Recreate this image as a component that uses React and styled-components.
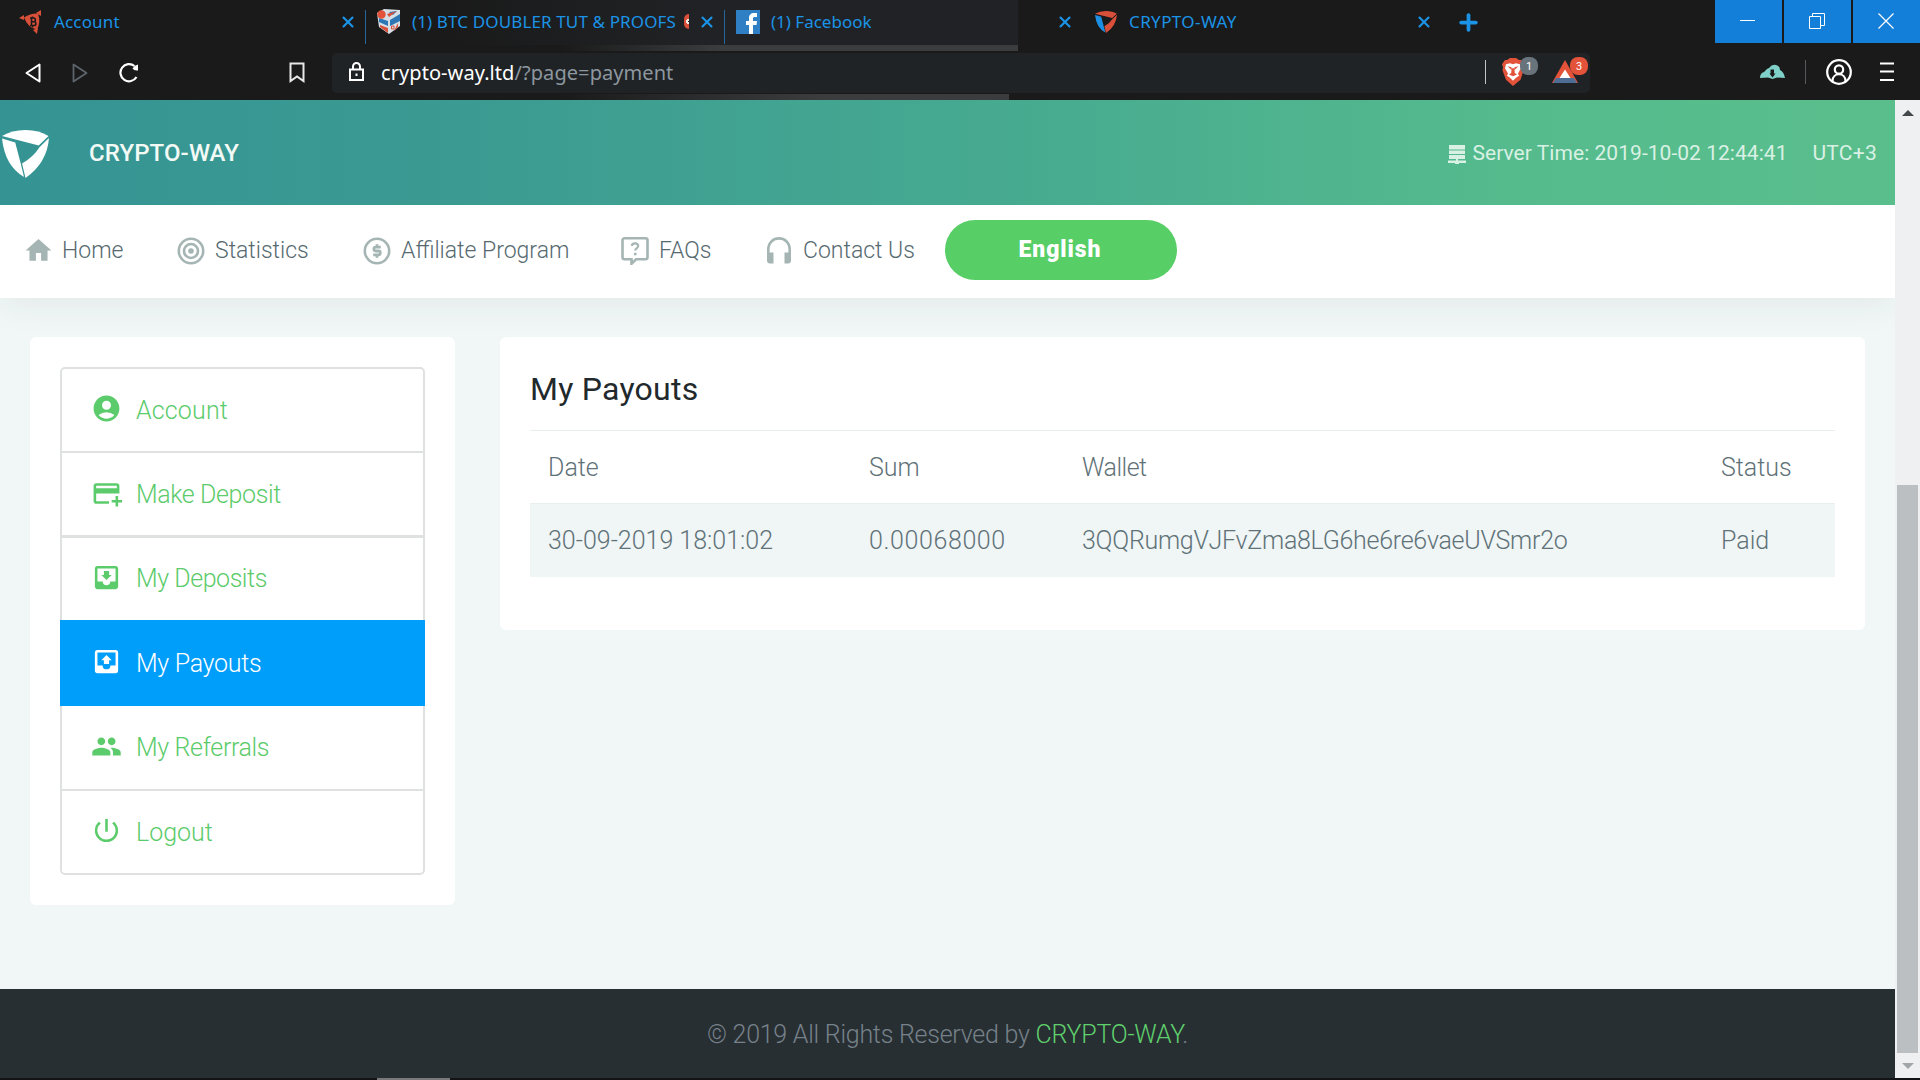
import styled, { createGlobalStyle } from 'styled-components';
import {
  MdHome,
  MdAccountCircle,
  MdAddCard,
  MdMoveToInbox,
  MdPeople,
  MdPowerSettingsNew
} from 'react-icons/md';
import { LuX, LuPlus } from 'react-icons/lu';

const tabs = [
  { icon: 'bit', title: 'Account', width: 366, indent: 18, spacing: 0.15 },
  { icon: 'tut', title: '(1) BTC DOUBLER TUT & PROOFS', width: 359, indent: 10, spacing: 0.13, cut: true },
  { icon: 'fb', title: '(1) Facebook', width: 358, indent: 10, spacing: 0 },
  { icon: 'way', title: 'CRYPTO-WAY', width: 359, indent: 10, spacing: 0.4 }
];

const navLinks = [
  { icon: 'home', label: 'Home', gap: 54, width: 61 },
  { icon: 'target', label: 'Statistics', gap: 53, width: 95 },
  { icon: 'dollar', label: 'Affiliate Program', gap: 53, width: 167 },
  { icon: 'faq', label: 'FAQs', gap: 53, width: 53 },
  { icon: 'phones', label: 'Contact Us', gap: 29, width: 113 }
];

const OutboxIcon = ({ size }) => (
  <svg viewBox='0 0 24 24' width={size} height={size} fill='currentColor'>
    <path d='M19 3H5a2 2 0 0 0-2 2v14a2 2 0 0 0 2 2h14a2 2 0 0 0 2-2V5a2 2 0 0 0-2-2zm0 12h-4a3 3 0 0 1-6 0H5V5h14v10zM16 11h-2v3h-4v-3H8l4-4 4 4z' />
  </svg>
);

const menu = [
  { Icon: MdAccountCircle, label: 'Account', height: 86, overlap: 0, spacing: 0.15 },
  { Icon: MdAddCard, label: 'Make Deposit', height: 87, overlap: 2, spacing: -0.4 },
  { Icon: MdMoveToInbox, label: 'My Deposits', height: 87, overlap: 3, spacing: -0.45 },
  { Icon: OutboxIcon, label: 'My Payouts', height: 86, overlap: 2, spacing: -0.3, active: true },
  { Icon: MdPeople, label: 'My Referrals', height: 87, overlap: 2, spacing: -0.35 },
  { Icon: MdPowerSettingsNew, label: 'Logout', height: 86, overlap: 2, spacing: 0 }
];

const payouts = [
  {
    date: '30-09-2019 18:01:02',
    sum: '0.00068000',
    wallet: '3QQRumgVJFvZma8LG6he6re6vaeUVSmr2o',
    status: 'Paid'
  }
];

const ShieldLogo = ({ width, height, top, left, right }) => (
  <svg width={width} height={height} viewBox='0 0 48 48' preserveAspectRatio='none'>
    <path fill={top} d='M0 6Q10 0 24 0Q38 0 47.500 6L37.500 15.500Z' />
    <path fill={left} d='M0 8.500L13.500 12.500L19 33L22.500 47Q3 36 0 8.500Z' />
    <path fill={right} d='M48 8Q46 33 24 48L20.500 33.500Q32 27 38.500 17Z' />
  </svg>
);

const TabIcon = ({ name }) => {
  if (name === 'bit') {
    return (
      <svg width='24' height='24' viewBox='0 0 24 24' fill='#d9503a'>
        <path d='M5 7.500Q12 3 19 3.500Q22 12 18 19.500Q9 18 5 7.500z' />
        <path d='M0 8l5-3v5zM22 0v6l-5-3zM18 24l-4-4 5-2z' />
        <path
          d='M11 8h3.500a1.900 1.900 0 0 1 0 3.800H12h3a1.900 1.900 0 0 1 0 3.800h-4M12.500 8v8M13.500 6.500v2M13.500 15.500v2'
          stroke='#1a1a1a'
          strokeWidth='1.500'
          fill='none'
        />
      </svg>
    );
  }
  if (name === 'tut') {
    return (
      <svg width='24' height='26' viewBox='0 0 24 26'>
        <path fill='#d5dfe5' d='M0 4L7 0 23 1V17L12 25 2 18Z' />
        <path fill='#2d76b5' d='M2 9l9 3v5l-9-4zM13 11l10-6v7l-10 5zM12 3l8-1-4 4z' />
        <path fill='#d9503a' d='M3 16l8 3v5l-8-6zM21 14v4l-4 4zM10 5l10-3-8 6z' />
        <circle cx='4.500' cy='5.500' r='4.200' fill='#e2533a' />
        <path fill='none' stroke='#d9503a' d='M14.500 17h2.500v3h-2.500z' />
      </svg>
    );
  }
  if (name === 'fb') {
    return (
      <svg width='24' height='24' viewBox='0 0 24 24'>
        <path fill='#2f7fc4' d='M0 0h24v24H0z' />
        <path fill='#fff' d='M13 24v-9h-3v-4h3V8c0-3 2-5 5-5h3v4h-2c-1.500 0-2 .5-2 2v2h4l-.5 4H17v9z' />
      </svg>
    );
  }
  return <ShieldLogo width={22} height={22} top='#d9503a' left='#1c8fe3' right='#d9503a' />;
};

const NavIcon = ({ name }) => {
  if (name === 'home') return <HomeIcon size={31} />;
  return (
    <svg width='28' height='28' viewBox='0 0 28 28' fill='none' stroke='currentColor' strokeWidth='2.6'>
      {name === 'target' && (
        <>
          <circle cx='14' cy='14' r='12.200' />
          <circle cx='14' cy='14' r='7' />
          <circle cx='14' cy='14' r='2.800' fill='currentColor' stroke='none' />
        </>
      )}
      {name === 'dollar' && (
        <>
          <circle cx='14' cy='14' r='12.200' />
          <path
            d='M17.800 10.200h-5a1.900 1.900 0 0 0 0 3.800h2.600a1.900 1.900 0 0 1 0 3.800h-5.200M14 7.200v3M14 17.800v3'
            strokeWidth='2.800'
          />
        </>
      )}
      {name === 'faq' && (
        <>
          <path
            d='M3.500 1.300h21a2 2 0 0 1 2 2v17a2 2 0 0 1-2 2H15l-4.500 4.500v-4.500h-7a2 2 0 0 1-2-2v-17a2 2 0 0 1 2-2z'
            strokeWidth='2.600'
          />
          <path d='M10.800 8.800c.4-3.500 6.700-3.200 6.400.2-.2 2.300-3 2.300-3 4.500' strokeWidth='2.200' />
          <path d='M14.200 15.800v2.500' strokeWidth='2.600' />
        </>
      )}
      {name === 'phones' && (
        <>
          <path d='M3.300 20v-7.500C3.300-2.300 24.700-2.300 24.700 12.500V20' />
          <path
            d='M2 15.500h6.500v11H5a3 3 0 0 1-3-3zM19.500 15.500H26v8a3 3 0 0 1-3 3h-3.500z'
            fill='currentColor'
            stroke='none'
          />
        </>
      )}
    </svg>
  );
};

const BrowserTabs = () => (
  <TabBar>
    {tabs.map(({ icon, title, width, indent, spacing, cut }, i) => (
      <Tab key={icon} $width={width} $indent={indent} $divided={i < 2}>
        <IconSlot>
          <TabIcon name={icon} />
        </IconSlot>
        <TabTitle $spacing={spacing}>{title}</TabTitle>
        {cut && <CutEmoji />}
        <LuX size={18} strokeWidth={2.8} />
      </Tab>
    ))}
    <NewTab>
      <LuPlus size={25} strokeWidth={3.6} />
    </NewTab>
    <WindowButtons>
      <WindowButton>
        <svg width='15' height='16' stroke='#fff'>
          <path d='M0 7.500h15' />
        </svg>
      </WindowButton>
      <WindowButton>
        <svg width='16' height='16' fill='none' stroke='#fff'>
          <path d='M.5 3.500h11v12H.5zM3.500 3V.5h12v12H12' />
        </svg>
      </WindowButton>
      <WindowButton>
        <svg width='16' height='16' fill='none' stroke='#fff' strokeWidth='1.200'>
          <path d='M.5.5l15 15M15.500.5l-15 15' />
        </svg>
      </WindowButton>
    </WindowButtons>
  </TabBar>
);

const AddressBar = () => (
  <ToolBar>
    <ToolIcons>
      <svg width='16' height='20' viewBox='0 0 16 20' fill='none' stroke='#fff' strokeWidth='2' strokeLinejoin='round'>
        <path d='M14.500 1.500v17L1.500 10z' />
      </svg>
      <svg width='16' height='20' viewBox='0 0 16 20' fill='none' stroke='#5d646b' strokeWidth='1.800' strokeLinejoin='round'>
        <path d='M1.500 1.500v17l13-8.500z' />
      </svg>
      <svg width='22' height='22' viewBox='0 0 22 22' fill='none' stroke='#fff' strokeWidth='2.200'>
        <path d='M17.500 15A8.600 8.600 0 1 1 15.500 4' />
        <path d='M13.500 6.500q1.500-3 5.500-4v6q-4 .5-5.500-2z' fill='#fff' stroke='none' />
      </svg>
    </ToolIcons>
    <svg width='16' height='21' viewBox='0 0 16 21' fill='none' stroke='#e8e8e8' strokeWidth='2'>
      <path d='M1.500 1.500h13v17.500L8 14.500 1.500 19z' />
    </svg>
    <AddressField>
      <svg width='15' height='20' viewBox='0 0 15 20' fill='none' stroke='#fff' strokeWidth='2'>
        <path d='M1 7.500h13v10.500H1zM4 7V4.500a3.500 3.500 0 0 1 7 0V7' />
        <path d='M6.500 11.500h2v2.500h-2z' fill='#fff' stroke='none' />
      </svg>
      <Address>
        crypto-way.ltd<span>/?page=payment</span>
      </Address>
      <Separator $color='#c4c4c4' />
      <Extension>
        <svg width='22' height='28' viewBox='0 0 22 27' preserveAspectRatio='none'>
          <path fill='#e2533a' d='M5 2l3-2h6l3 2 2 0 3 4-1 3 .5 3-3 9-7.500 6L4 21 .5 12 1 9 0 6l3-4z' />
          <path fill='#fff' d='M4 6l4-1 3 1 3-1 4 1 1 4-3 5 1 2-3 2-3 3-3-3-3-2 1-2-3-5z' />
          <path fill='#e2533a' d='M5.500 8l4 1v2.500zM16.500 8l-4 1v2.500zM9.700 10h2.600l.5 4.500L15 16l-4 1.500L7 16l2.200-1.500z' />
        </svg>
        <Badge $color='#69737c'>1</Badge>
      </Extension>
      <Extension>
        <svg width='26' height='23' viewBox='0 0 26 23'>
          <path fill='#e2533a' d='M13 0L0 23h26z' />
          <path fill='#4d6d94' d='M4 18L1 23h24l-3-5z' />
          <path fill='#fff' d='M13 9.500L7.500 18h11z' />
        </svg>
        <Badge $color='#e2533a'>3</Badge>
      </Extension>
    </AddressField>
    <ToolRight>
      <svg width='25' height='16' viewBox='0 0 25 16' fill='#7fd0c8'>
        <path d='M0 14Q0 9 4 8L7 5 9 4Q12 0 16 1Q20 2 20 6Q24 8 25 14L17 13.500 12.500 15 8 13.500z' />
        <path fill='#1a1a1a' d='M10.500 5.500h3.500v4h1.500l-3 4-3-4h1z' />
      </svg>
      <Separator $color='#55595d' />
      <svg width='26' height='26' viewBox='0 0 26 26' fill='none' stroke='#fff' strokeWidth='2.200'>
        <circle cx='13' cy='13' r='11.800' />
        <circle cx='13' cy='10.500' r='4.200' />
        <path d='M6.500 22c0-9 13-9 13 0' />
      </svg>
      <MenuBars width='14' height='20' viewBox='0 0 14 20' stroke='#fff' strokeWidth='2'>
        <path d='M0 1.500h14M0 9.500h14M0 18h14' />
      </MenuBars>
    </ToolRight>
  </ToolBar>
);

const App = () => {
  return (
    <>
      <GlobalStyle />
      <Window>
        <BrowserTabs />
        <AddressBar />
        <Viewport>
          <Page>
            <Banner>
              <ShieldLogo width={47} height={48} top='#fff' left='#fff' right='#fff' />
              <Brand>CRYPTO-WAY</Brand>
              <svg width='18' height='19' viewBox='0 0 18 19' fill='#d9f1e4'>
                <path d='M1 0h16v4.500H1zM1 5.500h16V9H1zM1 10h16v4H1zM8 14h2v1.500h8V18h-7v1H7v-1H0v-2.500h8z' />
              </svg>
              <ServerTime>Server Time: 2019-10-02 12:44:41</ServerTime>
              <Zone>UTC+3</Zone>
            </Banner>
            <Navbar>
              {navLinks.map(({ icon, label, gap, width }) => (
                <NavLink key={icon} $gap={gap} $width={width}>
                  <NavIcon name={icon} />
                  <span>{label}</span>
                </NavLink>
              ))}
              <LangButton>English</LangButton>
            </Navbar>
            <Main>
              <Sidebar>
                {menu.map(({ Icon, label, height, overlap, spacing, active }) => (
                  <MenuItem
                    key={label}
                    $height={height}
                    $overlap={overlap}
                    $spacing={spacing}
                    $active={active}
                  >
                    <Icon size={31} />
                    <span>{label}</span>
                  </MenuItem>
                ))}
              </Sidebar>
              <Card>
                <h2>My Payouts</h2>
                <Table>
                  <colgroup>
                    <Col $width={321} />
                    <Col $width={213} />
                    <Col $width={639} />
                    <Col $width={132} />
                  </colgroup>
                  <thead>
                    <tr>
                      <Th>Date</Th>
                      <Th>Sum</Th>
                      <Th $spacing={-0.5}>Wallet</Th>
                      <Th>Status</Th>
                    </tr>
                  </thead>
                  <tbody>
                    {payouts.map((item) => (
                      <tr key={item.date}>
                        <Td>{item.date}</Td>
                        <Td $spacing={0.6}>{item.sum}</Td>
                        <Td $spacing={-0.28}>{item.wallet}</Td>
                        <Td>{item.status}</Td>
                      </tr>
                    ))}
                  </tbody>
                </Table>
              </Card>
            </Main>
            <Footer>
              © 2019 All Rights Reserved by <a>CRYPTO-WAY</a>.
            </Footer>
          </Page>
          <Scrollbar>
            <Arrow>
              <svg width='12' height='6' fill='#44484a'>
                <path d='M6 0l6 6H0z' />
              </svg>
            </Arrow>
            <Thumb />
            <Arrow>
              <svg width='12' height='6' fill='#a2a6a8'>
                <path d='M6 6l6-6H0z' />
              </svg>
            </Arrow>
          </Scrollbar>
        </Viewport>
        <TaskbarEdge />
      </Window>
    </>
  );
};

const GlobalStyle = createGlobalStyle`
  * {
    box-sizing: border-box;
  }
  body {
    margin: 0;
    overflow: hidden;
    background: #1a1a1a;
    font-family: Roboto, 'Liberation Sans', sans-serif;
  }
  svg {
    flex: none;
  }
`;

const Window = styled.div`
  display: flex;
  flex-direction: column;
  width: 1920px;
  height: 1080px;
  background:
    linear-gradient(90deg, transparent, #3a3c3e 160px) 560px 45px / 458px 6px no-repeat,
    linear-gradient(90deg, transparent, #3a3c3e 260px) 560px 94px / 449px 6px no-repeat,
    linear-gradient(90deg, transparent, #202225 260px) 440px 0 / 578px 45px no-repeat,
    #1a1a1a;
`;

const TabBar = styled.div`
  display: flex;
  height: 44px;
  color: #1b93e6;
  font-family: 'Noto Sans', 'Open Sans', sans-serif;
`;

const Tab = styled.div`
  display: flex;
  align-items: center;
  width: ${(props) => props.$width}px;
  padding: 0 9px 1px ${(props) => props.$indent}px;
  background: ${(props) =>
    props.$divided
      ? 'linear-gradient(#27669a, #27669a) 100% 10px / 1px 34px no-repeat'
      : 'none'};
`;

const IconSlot = styled.div`
  display: flex;
  justify-content: center;
  width: 26px;
`;

const TabTitle = styled.span`
  flex: 1;
  padding: 0 0 1px 10px;
  font-size: 17px;
  white-space: nowrap;
  letter-spacing: ${(props) => props.$spacing}px;
`;

const CutEmoji = styled.i`
  width: 5px;
  height: 15px;
  margin-right: 9px;
  border-radius: 7px 0 0 7px;
  background: radial-gradient(circle at 100% 50%, #1a1a1a 1px, #f3e9e4 1px 3px, #d9503a 3px);
`;

const NewTab = styled.div`
  display: flex;
  align-items: center;
  padding-left: 14px;
`;

const WindowButtons = styled.div`
  display: flex;
  gap: 2px;
  margin-left: auto;
`;

const WindowButton = styled.div`
  display: flex;
  align-items: center;
  justify-content: center;
  width: 67px;
  height: 43px;
  padding: 0 2px 1px 0;
  background: #147fd8;
`;

const ToolBar = styled.div`
  display: flex;
  align-items: center;
  height: 56px;
  padding-top: 1px;
`;

const ToolIcons = styled.div`
  display: flex;
  align-items: center;
  gap: 31px;
  width: 289px;
  padding-left: 25px;
`;

const AddressField = styled.div`
  display: flex;
  align-items: center;
  width: 1258px;
  height: 40px;
  margin-left: 27px;
  padding: 0 4px 2px 17px;
  border-radius: 5px;
  background: #202326;
`;

const Address = styled.div`
  flex: 1;
  padding: 1px 0 0 17px;
  color: #fff;
  font-family: 'Noto Sans', 'Open Sans', sans-serif;
  font-size: 20px;
  letter-spacing: 0.07px;
  span {
    color: #8d979f;
  }
`;

const Separator = styled.i`
  width: 1px;
  height: 24px;
  background: ${(props) => props.$color};
`;

const Extension = styled.div`
  position: relative;
  display: flex;
  align-items: center;
  width: 50px;
  height: 28px;
  padding-left: 16px;
`;

const Badge = styled.b`
  position: absolute;
  top: -1px;
  left: 34px;
  width: 18px;
  height: 18px;
  border-radius: 8px;
  background: ${(props) => props.$color};
  color: #fff;
  font-size: 11px;
  font-weight: 400;
  line-height: 19px;
  text-align: center;
`;

const ToolRight = styled.div`
  display: flex;
  align-items: center;
  gap: 20px;
  margin-left: auto;
  padding: 0 26px 1px 0;
`;

const MenuBars = styled.svg`
  margin-left: 8px;
`;

const Viewport = styled.div`
  display: flex;
  height: 978px;
`;

const Page = styled.div`
  display: flex;
  flex-direction: column;
  width: 1895px;
  overflow: hidden;
  background: #f1f7f7;
`;

const Banner = styled.header`
  position: relative;
  z-index: 1;
  display: flex;
  align-items: center;
  height: 105px;
  padding: 3px 18px 0 2px;
  background: linear-gradient(90deg, #359493 0%, #3b9b92 25%, #47ab90 55%, #55bb8d 80%, #5abe8c 100%);
  color: #d9f1e4;
  font-size: 21px;
`;

const Brand = styled.span`
  flex: 1;
  padding: 0 0 2px 40px;
  color: #f3faf6;
  font-size: 24px;
  font-weight: 500;
  letter-spacing: 0.1px;
`;

const ServerTime = styled.span`
  padding: 0 25px 2px 7px;
  letter-spacing: 0.04px;
`;

const Zone = styled.span`
  padding-bottom: 2px;
  letter-spacing: 0.25px;
`;

const Navbar = styled.nav`
  position: relative;
  display: flex;
  align-items: center;
  height: 93px;
  padding: 0 0 3px 23px;
  background: #fff;
  box-shadow: 0 4px 36px rgba(40, 50, 50, 0.08);
`;

const NavLink = styled.a`
  display: flex;
  align-items: center;
  gap: 10px;
  margin-right: ${(props) => props.$gap}px;
  padding-top: 1px;
  color: #566a70;
  font-size: 23px;
  font-weight: 300;
  svg {
    color: #a5b5b4;
  }
  span {
    width: ${(props) => props.$width}px;
    white-space: nowrap;
  }
`;

const HomeIcon = styled(MdHome)`
  margin-right: -2px;
`;

const LangButton = styled.button`
  width: 232px;
  height: 60px;
  padding: 0 2px 1px 0;
  border: 0;
  border-radius: 30px;
  background: #57ce66;
  color: #fff;
  font: 900 23px Roboto, sans-serif;
  letter-spacing: 0.9px;
`;

const Main = styled.main`
  display: flex;
  align-items: flex-start;
  gap: 45px;
  flex: 1;
  padding: 39px 30px;
`;

const Sidebar = styled.aside`
  position: relative;
  width: 425px;
  height: 568px;
  padding: 30px;
  border-radius: 6px;
  background: #fff;
`;

const MenuItem = styled.a`
  position: relative;
  z-index: ${(props) => (props.$active ? 1 : 0)};
  display: flex;
  align-items: center;
  gap: 14px;
  height: ${(props) => props.$height}px;
  margin-top: -${(props) => props.$overlap}px;
  padding-left: 29px;
  border: 2px solid ${(props) => (props.$active ? '#009efb' : '#dfe1e1')};
  background: ${(props) => (props.$active ? '#009efb' : 'transparent')};
  color: ${(props) => (props.$active ? '#fff' : '#5ccb6b')};
  font-size: 25px;
  font-weight: 300;
  letter-spacing: ${(props) => props.$spacing}px;
  svg {
    margin-bottom: 3px;
  }
  &:first-child {
    border-radius: 5px 5px 0 0;
  }
  &:last-child {
    border-radius: 0 0 5px 5px;
  }
`;

const Card = styled.section`
  width: 1365px;
  height: 293px;
  padding: 31px 30px;
  border-radius: 6px;
  background: #fff;
  h2 {
    margin: 0 0 20px;
    color: #22292c;
    font-size: 32px;
    font-weight: 400;
    line-height: 42px;
    letter-spacing: 0.25px;
  }
`;

const Table = styled.table`
  width: 1305px;
  border-collapse: collapse;
  table-layout: fixed;
  color: #5f7278;
  font-size: 25px;
`;

const Col = styled.col`
  width: ${(props) => props.$width}px;
`;

const Th = styled.th`
  height: 73px;
  padding: 0 0 0 18px;
  border-top: 1px solid #e9eeef;
  font-weight: 300;
  text-align: left;
  white-space: nowrap;
  letter-spacing: ${(props) => props.$spacing || 0}px;
`;

const Td = styled(Th).attrs({ as: 'td' })`
  background: #f0f5f6;
`;

const Footer = styled.footer`
  height: 89px;
  background: #282f33;
  color: #76818a;
  font-size: 25px;
  font-weight: 300;
  line-height: 91px;
  letter-spacing: -0.25px;
  text-align: center;
  a {
    color: #5fd06c;
  }
`;

const Scrollbar = styled.div`
  display: flex;
  flex-direction: column;
  align-items: center;
  width: 25px;
  background: #eef0f1;
`;

const Arrow = styled.div`
  display: flex;
  align-items: center;
  height: 25px;
`;

const Thumb = styled.div`
  width: 21px;
  height: 568px;
  margin-top: auto;
  background: #bbbfc1;
`;

const TaskbarEdge = styled.div`
  height: 2px;
  background: linear-gradient(#77797b, #77797b) 377px 0 / 73px 2px no-repeat, #131415;
`;

export default App;
